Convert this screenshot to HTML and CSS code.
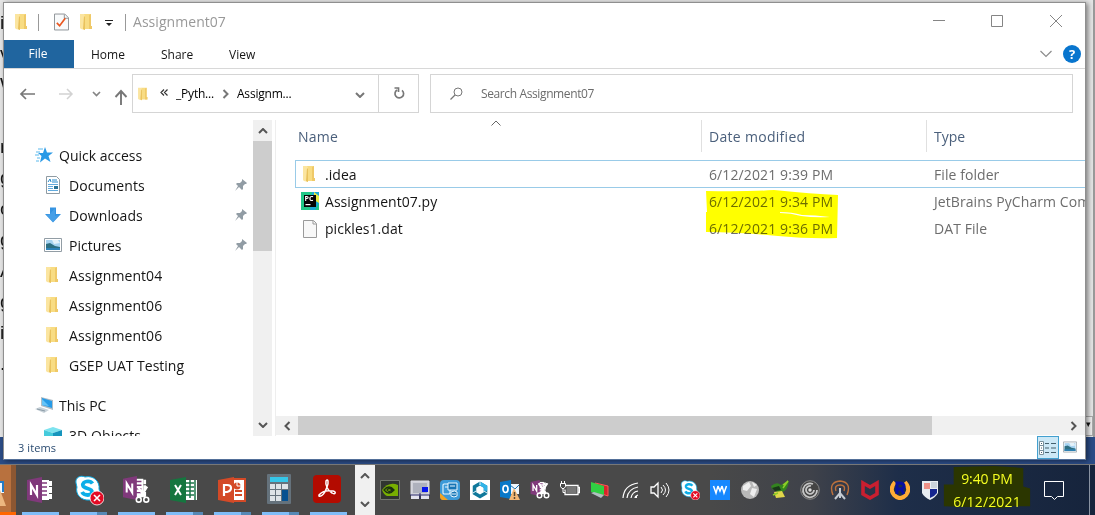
FILE: index.html
```html
<!DOCTYPE html>
<html lang="en">
<head>
<meta charset="utf-8">
<title>Assignment07</title>
<link rel="stylesheet" href="styles.css">
</head>
<body>
<svg class="defs" width="0" height="0">
  <symbol id="folder" viewBox="0 0 16 18"><path d="M5 1h7v12h1v3H5z" fill="#f8dc83"/><path d="M10 2l2-1v12h1v3h-3z" fill="#efc968"/><path d="M1 1h4l1 2v14l-4-1-1-1z" fill="#fbe5a0"/><path d="M5 3l1 1v13l-2-1z" fill="#e9c25d"/></symbol>
  <symbol id="pin" viewBox="0 0 14 14"><path d="M8 1l5 4-1 1h-1L9 8v3l-1 1-3-3-4 4 3-5-2-2 1-1h3l2-2V2z" fill="#919ca4"/></symbol>
  <symbol id="picture" viewBox="0 0 18 14"><path d="M.5.5h17v13H.5z" fill="#fff" stroke="#929da5"/><path d="M2 2h14v10H2z" fill="#a6d3f1"/><path d="M2 6l4-1 5 3 5 1v3H2z" fill="#2d6f82"/><path d="M2 10h14v2H2z" fill="#2e83b9"/><path d="M8 2h6l2 3-6 1z" fill="#e4f2fa"/></symbol>
  <symbol id="onenote" viewBox="0 0 28 26"><path d="M14 3h9v20h-9z" fill="#fff"/><path d="M23 4h3v5h-3zm0 6h3v6h-3zm0 7h3v5h-3z" fill="#fff"/><path d="M15 6h6m-6 4h6m-6 4h6m-6 4h6" stroke="#80397b" stroke-width="1.5"/><path d="M1 3l15-3v26L1 23z" fill="#80397b"/><path d="M5 18V8l6 10V8" fill="none" stroke="#fff" stroke-width="2.2"/></symbol>
  <symbol id="scissors" viewBox="0 0 16 18"><path d="M3 0l8 12M13 0L5 12" stroke="#fff" stroke-width="2.4"/><circle cx="4" cy="14" r="2.6" fill="none" stroke="#fff" stroke-width="1.7"/><circle cx="12" cy="14" r="2.6" fill="none" stroke="#fff" stroke-width="1.7"/></symbol>
  <symbol id="skype" viewBox="0 0 30 30"><path d="M2 8C1 2 7 0 11 2c9-2 15 5 14 12 3 7-3 13-9 11C7 26 1 19 3 12z" fill="#fff" stroke="#0caee8"/><path d="M3 7C3 3 8 1 11 3.500c8-1 13 4 12.500 11 2 6-3 10-8 9C8 24 3 19 4 12z" fill="#fff"/><path d="M18.500 8.500C16 5 8 6 9 10.500c1 4 9 2 9 6.500 0 4-8 4-10 0" fill="none" stroke="#0caee8" stroke-width="3.800"/><circle cx="23" cy="23" r="7" fill="#e30b24" stroke="#fff" stroke-width=".8"/><path d="M20 20l6 6m0-6l-6 6" stroke="#fff" stroke-width="1.600"/></symbol>
  <symbol id="up" viewBox="0 0 10 6"><path d="M1 5l4-4 4 4" fill="none" stroke="currentColor" stroke-width="2"/></symbol>
  <symbol id="down" viewBox="0 0 10 6"><path d="M1 1l4 4 4-4" fill="none" stroke="currentColor" stroke-width="2"/></symbol>
  <symbol id="left" viewBox="0 0 8 10"><path d="M6.500 1l-4 4 4 4" fill="none" stroke="currentColor" stroke-width="2"/></symbol>
  <symbol id="right" viewBox="0 0 8 10"><path d="M1.500 1l4 4-4 4" fill="none" stroke="currentColor" stroke-width="2"/></symbol>
</svg>

<div class="desktop">
  <div class="document">
    <div class="doc-text"><span>in</span><span>vi</span><span>W</span><span></span><span>ne</span><span>g</span><span>o</span><span>g</span><span>Ac</span><span>g</span><span>in</span><span>.</span></div>
    <div class="doc-scroll">▾</div>
  </div>
  <div class="doc-status"></div>

  <main class="window">
    <header class="titlebar">
      <div class="quickbar">
        <svg class="folder f1"><use href="#folder"/></svg><i class="bar b1"></i>
        <svg class="check" viewBox="0 0 16 18"><path d="M.5.5h11l4 4v13H.5z" fill="#f8fafb" stroke="#8a8f93"/><path d="M11 1v4h4" fill="none" stroke="#8a8f93"/><path d="M3 10l3 3 6-8" fill="none" stroke="#e9561f" stroke-width="1.800"/></svg>
        <svg class="folder f2"><use href="#folder"/></svg>
        <svg class="customize" viewBox="0 0 8 7"><path d="M0 0h8v1H0zM1 3h6L4 6z" fill="#222"/></svg><i class="bar b2"></i>
        <span class="title">Assignment07</span>
      </div>
      <svg class="winbuttons" viewBox="0 0 130 14"><path d="M0 7.500h12M58.500 2.500h11v11h-11zM117 2l12 12m0-12l-12 12" fill="none" stroke="#858585"/></svg>
    </header>
    <nav class="tabs"><span class="tab file">File</span><span class="tab home">Home</span><span class="tab share">Share</span><span class="tab view">View</span>
      <div class="help"><svg width="12" height="8" viewBox="0 0 12 8"><path d="M.5 1l5.500 5.500L11.500 1" fill="none" stroke="#8c8c8c" stroke-width="1.200"/></svg><b>?</b></div>
    </nav>
    <div class="toolbar">
      <svg class="arrows" viewBox="0 0 114 22"><path d="M17 11H3m5-5l-5 5 5 5" fill="none" stroke="#777" stroke-width="1.700"/><path d="M41 11h13m-5-5l5 5-5 5" fill="none" stroke="#d2d2d2" stroke-width="1.500"/><path d="M75 9l3.500 3.500L82 9" fill="none" stroke="#858585" stroke-width="1.700"/><path d="M103 22V8m-5.500 6l5.500-6 5.500 6" fill="none" stroke="#777" stroke-width="1.900"/></svg>
      <div class="address"><div class="path"><svg class="folder small"><use href="#folder"/></svg><svg class="chev" viewBox="0 0 8 7"><path d="M4 .5l-3 3 3 3M7.500.5l-3 3 3 3" fill="none" stroke="#333" stroke-width="1.200"/></svg><span class="crumb first">_Pyth...</span><svg class="sep"><use href="#right"/></svg><span class="crumb current">Assignm...</span><svg class="drop"><use href="#down"/></svg></div>
        <div class="refresh"><svg width="12" height="13" viewBox="0 0 12 13"><path d="M4 3a4.300 4.300 0 1 0 5 .3M1.500 1h4v4" fill="none" stroke="#777" stroke-width="1.700"/></svg></div></div>
      <div class="search"><svg width="13" height="13" viewBox="0 0 13 13"><circle cx="8" cy="5" r="4" fill="none" stroke="#777"/><path d="M5 8l-4.500 4.500" stroke="#777" stroke-width="1.200"/></svg><span>Search Assignment07</span></div>
    </div>
    <section class="content">
      <aside class="sidebar">
        <div class="item group"><svg class="star" viewBox="0 0 18 16"><path d="M10 0l2 5.500h6l-4.500 3.500 2 6L10 11.500 5 15.500 6.500 9 3 6h5z" fill="#2b9ae6"/><path d="M3 2h5M1 5h4M0 8h4m-2 3h3m-4 3h3" stroke="#5bb9ec"/></svg><span class="quick">Quick access</span></div>
        <div class="item"><svg class="ico" viewBox="0 0 18 18"><path d="M2.500.5h10l3 3v14h-13z" fill="#fff" stroke="#8f9ba3"/><path d="M4 6l2-3 1 3M8 4h5M8 6h6" fill="none" stroke="#268acb"/><path d="M4 8.500h10M4 10.500h5M4 12.500h5M4 14.500h10" stroke="#61aadd"/><path d="M10 10h4v3h-4z" fill="#287296"/></svg><span class="docs">Documents</span><svg class="pin"><use href="#pin"/></svg></div>
        <div class="item"><svg class="ico" viewBox="0 0 18 18"><path d="M6 1.500h6V8h5l-8 8.500L1 8h5z" fill="#3593e1"/><path d="M6 8l5-6v8l4-1-6 7-7-7z" fill="#58abed" opacity=".5"/></svg><span class="docs">Downloads</span><svg class="pin"><use href="#pin"/></svg></div>
        <div class="item"><svg class="ico"><use href="#picture"/></svg><span class="pics">Pictures</span><svg class="pin"><use href="#pin"/></svg></div>
        <div class="item"><svg class="ico"><use href="#folder"/></svg><span class="assign">Assignment04</span></div>
        <div class="item"><svg class="ico"><use href="#folder"/></svg><span class="assign">Assignment06</span></div>
        <div class="item"><svg class="ico"><use href="#folder"/></svg><span class="assign">Assignment06</span></div>
        <div class="item"><svg class="ico"><use href="#folder"/></svg><span class="gsep">GSEP UAT Testing</span></div>
        <div class="item group pc"><svg class="star" viewBox="0 0 18 16"><path d="M6 0l12 3v10L6 9z" fill="#b0bdc6"/><path d="M7 1l10 3v7L7 8z" fill="#269be7"/><path d="M7 8V2l7 7z" fill="#65c4f8"/><path d="M0 12l5-2 9 3-5 3z" fill="#c8d2d9"/><path d="M2 12l8 2" stroke="#8b9ba6"/></svg><span class="thispc">This PC</span></div>
        <div class="item"><svg class="ico" viewBox="0 0 18 18"><path d="M0 4l9-3 9 3-9 3z" fill="#7de3ef"/><path d="M0 4l9 3v11l-9-4z" fill="#45cbdc"/><path d="M9 7l9-3v10l-9 4z" fill="#1695bd"/></svg><span class="docs">3D Objects</span></div>
      </aside>
      <div class="vscroll"><svg><use href="#up"/></svg><div class="thumb"></div><svg><use href="#down"/></svg></div>
      <div class="pane">
        <svg class="sort" viewBox="0 0 10 6"><path d="M.5 5.500L5 1l4.500 4.500" fill="none" stroke="#666"/></svg>
        <div class="columns"><span class="name">Name</span><span class="date">Date modified</span><span class="type">Type</span></div>
        <div class="rows">
          <div class="row selected"><svg class="ico"><use href="#folder"/></svg><span class="name">.idea</span><span class="date">6/12/2021 9:39 PM</span><span class="type">File folder</span></div>
          <div class="row"><svg class="pycharm" viewBox="0 0 18 18"><path d="M0 0h18v18H0z" fill="#20c887"/><path d="M11 0h7v11l-4 7H9z" fill="#1ca9d8"/><path d="M13 0l5 4v7l-5-3z" fill="#e6ec45"/><path d="M3 3h12v12H3z" fill="#050505"/><text x="3.500" y="9">PC</text><path d="M4.500 12h5v1.200h-5z" fill="#fff"/></svg><span class="name">Assignment07.py</span><span class="date">6/12/2021 9:34 PM</span><span class="type">JetBrains PyCharm Com</span></div>
          <div class="row"><svg class="ico" viewBox="0 0 18 18"><path d="M2.500.5h10l3 3v14h-13z" fill="#f8f8f8" stroke="#9a9a9a"/><path d="M12 1v3h3" fill="none" stroke="#9a9a9a"/></svg><span class="name">pickles1.dat</span><span class="date">6/12/2021 9:36 PM</span><span class="type">DAT File</span></div>
        </div>
        <svg class="marker" viewBox="0 0 134 50"><path d="M1 1q37 1 68-1 38 4 64 5l-1 43q-28 1-59-2-38-4-72-4V22h1z" fill="#ff0"/><path d="M75 22q12 0 22 3 13 0 28 2-15 1-29-1-10-3-21-3z" fill="#fff"/></svg>
        <div class="hscroll"><svg><use href="#left"/></svg><div class="thumb"></div><svg><use href="#right"/></svg></div>
      </div>
    </section>
    <footer class="status"><span>3 items</span><div class="views"><div class="details"><svg width="18" height="14" viewBox="0 0 18 14"><path d="M.5.5h4v13h-4zM0 4.500h5M0 9.500h5" fill="#fff" stroke="#7a929d"/><path d="M2 2.500h1M2 7h1M2 11.500h1M6 2.500h4m2 0h5M6 7h4m2 0h5m-11 4.500h4m2 0h5" stroke="#44606d"/></svg></div><svg class="thumbs"><use href="#picture"/></svg></div></footer>
  </main>

  <footer class="taskbar">
    <div class="edgeapp"><svg width="6" height="25" viewBox="0 0 6 25"><path d="M0 0h4v12H0z" fill="#f3f7fb"/><path d="M0 1h3v10" fill="none" stroke="#247bc4" stroke-width="2"/><path d="M0 9l6 16H0z" fill="#edb77f"/></svg></div>
    <div class="apps">
      <div class="app"><svg class="appicon"><use href="#onenote"/></svg></div>
      <div class="app stack"><svg class="appicon sky"><use href="#skype"/></svg></div>
      <div class="app clip"><svg class="appicon" viewBox="0 0 28 28"><use href="#onenote" width="26" height="24"/><use href="#scissors" x="13" y="10" width="15" height="18"/></svg></div>
      <div class="app stack"><svg class="appicon" viewBox="0 0 28 26"><path d="M13 3h14v20H13z" fill="#fff"/><path d="M14 6h10M14 10h10M14 14h10M14 18h10M20 3v18M25 3v20" stroke="#1d764a" stroke-width="1.500"/><path d="M0 3l16-3v26L0 23z" fill="#15763f"/><path d="M5 8l6 10m0-10L5 18" stroke="#fff" stroke-width="2"/></svg></div>
      <div class="app stack"><svg class="appicon" viewBox="0 0 28 26"><path d="M13 3h14v20H13z" fill="#fff"/><path d="M13 2h14v22H13M17 14h7m-7 4h7" fill="none" stroke="#d44a27" stroke-width="2"/><circle cx="19" cy="9" r="3.500" fill="#d44a27"/><path d="M19 5v4h4" stroke="#fff" fill="none"/><path d="M0 3l16-3v26L0 23z" fill="#d44a27"/><path d="M6 19V8h3q4 0 4 3t-4 4H6" fill="none" stroke="#fff" stroke-width="2.200"/></svg></div>
      <div class="app stack"><svg class="appicon calc" viewBox="0 0 24 30"><rect width="24" height="30" rx="1" fill="#65727c"/><path d="M3 3h18v5H3z" fill="#36c6e8"/><path d="M3 10h5v5H3zm6 0h5v5H9zm6 0h6v5h-6zM3 16h5v5H3zm6 0h5v5H9zM3 22h5v5H3zm6 0h5v5H9z" fill="#dde3e7"/><path d="M15 16h6v11h-6z" fill="#075190"/></svg></div>
      <div class="app"><svg class="appicon acro" viewBox="0 0 28 28"><rect width="28" height="28" rx="4" fill="#b30b00"/><path d="M6 20c3-4 8-5 14-4 4 1 2 4-1 2-4-2-7-8-6-12 2-3 3 1 1 6-2 6-5 10-8 9z" fill="none" stroke="#fff" stroke-width="1.500"/></svg></div>
    </div>
    <div class="taskscroll"><svg><use href="#up"/></svg><svg><use href="#down"/></svg></div>
    <div class="tray">
      <svg viewBox="0 0 20 20"><path d="M.5.5h19v19H.5z" fill="#303530" stroke="#73776f"/><path d="M2 10q7-9 16-5v11H7q-3-1-5-6z" fill="#78af00"/><path d="M4 10q5-6 10 0-5 6-10 0zm3 0q2-3 5 0-3 3-5 0z" fill="none" stroke="#1b3010" stroke-width="1.300"/></svg>
      <svg viewBox="0 0 20 20"><path d="M1 1h18v14H1z" fill="#cfd0d8" stroke="#dedee6"/><path d="M3 3h14v10H3z" fill="#aeb1bd"/><path d="M12 7h6v5h-6z" fill="#0715ec"/><path d="M1 15h8v4H1zm10 0h8v4h-8z" fill="#e2e2ee"/><path d="M0 15h20M10 13v6" stroke="#26266a"/></svg>
      <svg viewBox="0 0 20 20"><rect width="20" height="20" rx="4" fill="#3c9ad8"/><path d="M0 13l8 7H3q-3 0-3-4z" fill="#f2a321"/><rect x="3" y="4" width="7" height="10" rx="1" fill="none" stroke="#eaf7ff" stroke-width="1.100"/><path d="M8 3h9v7H8zm3 9q4-2 6 0v4q-3 2-6 0z" fill="#1775b5" stroke="#eaf7ff"/><path d="M5 7h3m2-1h5m-3 8h4" stroke="#eaf7ff"/></svg>
      <svg viewBox="0 0 20 20"><path d="M0 0h20v20H0z" fill="#fff"/><path d="M10 3.500l5.500 3.200v6.600L10 16.500l-5.500-3.200V6.700z" fill="none" stroke="#10789b" stroke-width="3.500"/><path d="M10 3.500l5.500 3.200v4" fill="none" stroke="#31b3e8" stroke-width="3.500"/><path d="M3 13l3-2m4-10v4m7 8l-3-2" stroke="#e5f8ff"/></svg>
      <svg viewBox="0 0 20 20"><path d="M9 4h10v10H9z" fill="#eff6fb"/><path d="M10 5l5 4 4-4" stroke="#1674bb" fill="none"/><path d="M0 2l11-2v19L0 17z" fill="#0878c8"/><ellipse cx="5.500" cy="9" rx="2.500" ry="3.500" fill="none" stroke="#fff" stroke-width="1.700"/><path d="M14 8l6 12H9z" fill="#f3b775"/><path d="M14.500 12v4m0 1v2" stroke="#574831" stroke-width="1.500"/></svg>
      <svg viewBox="0 0 20 20"><use href="#onenote" width="17" height="16"/><use href="#scissors" x="6" y="3" width="14" height="16"/></svg>
      <svg viewBox="0 0 20 20"><path d="M5 5.500h13v9H5v-5m13-2h1.500v5H18" fill="none" stroke="#fff" stroke-width="1.300"/><path d="M6.500 7h10v6h-10z" fill="#777"/><path d="M.5 3.500h5v3l-1.500 2H2l-1.500-2zM1.500 1v2m3-2v2M3 8.500v4h2" fill="#4a4a4a" stroke="#fff"/></svg>
      <svg viewBox="0 0 20 20"><path d="M5 3l13 3v10L6 12z" fill="#d6252a" stroke="#ff5555"/><path d="M1 2l13 4v9L1 12z" fill="#30cf43"/><path d="M1 13l3-1 10 3-3 3z" fill="#afbfc0"/></svg>
      <svg viewBox="0 0 20 20"><g fill="none" stroke="#fff" stroke-width="1.200"><path d="M3 18Q4 5 18 3M7 18Q8 9 18 7M11 18q1-6 7-7M15 18q0-2 3-3"/></g><path d="M15 16h2v2h-2z" fill="#fff"/></svg>
      <svg viewBox="0 0 20 20"><path d="M1 7h3l4-4v14l-4-4H1z" fill="none" stroke="#fff" stroke-width="1.300"/><path d="M11 7q3 3 0 6m2-8q5 5 0 10m3-12q6 7 0 14" fill="none" stroke="#fff"/></svg>
      <svg><use href="#skype"/></svg>
      <svg viewBox="0 0 20 20"><path d="M0 0h20v20H0z" fill="#1688ff"/><path d="M3.500 6l2.500 7 2-7m4 0l2 7 2.500-7M8 6l2 5 2-5" fill="none" stroke="#fff" stroke-width="1.500"/></svg>
      <svg viewBox="0 0 20 20"><circle cx="10" cy="10" r="9" fill="#b9b9b9"/><path d="M3 6l6-4 2 4-4 5-4-1zm9-4l5 3-3 2zm0 6l5 1-3 8-4-3z" fill="#eee"/></svg>
      <svg viewBox="0 0 20 20"><path d="M1 6q6-5 10-1l8-4q-2 11-7 11l-8 2 3-3-5-2z" fill="#33831f"/><path d="M2 8l7-2 2 4-6 1z" fill="#193718"/><path d="M4 12l8-1 3 6-9 1z" fill="#e1d64a"/><path d="M13 5l5-4-5 7M3 15l5-2" fill="none" stroke="#8ccc27" stroke-width="1.500"/></svg>
      <svg viewBox="0 0 20 20"><circle cx="10" cy="10" r="9.300" fill="#444" stroke="#888"/><path d="M17 10a7 7 0 1 1-4-6M14 10a4 4 0 1 1-3-4" fill="none" stroke="#c6c6c6" stroke-width="1.800"/><circle cx="10" cy="10" r="1.700" fill="#ddd"/></svg>
      <svg viewBox="0 0 20 20"><path d="M3 15Q-2 2 10 1q12 1 7 14M6 11q-2-6 4-6t4 6" fill="none" stroke="#bd713c" stroke-width="1.400"/><path d="M10 8v5m-5 6l5-6 5 6m-5-6v5" fill="none" stroke="#c5cbd2" stroke-width="2"/></svg>
      <svg viewBox="0 0 20 20"><path d="M3 3l7 4 7-4v11l-7 4-7-4z" fill="none" stroke="#c91f30" stroke-width="3.600"/></svg>
      <svg viewBox="0 0 20 20"><path d="M5 2Q-1 9 4 15q6 6 12 0 5-6-1-13" fill="none" stroke="#ffac36" stroke-width="4"/><path d="M7 14V3h2q5 0 5 3t-5 3H8m3 0l3 5" fill="none" stroke="#0710a1" stroke-width="3"/></svg>
      <svg viewBox="0 0 20 20"><path d="M2 1h16v12q-3 5-8 7-6-3-8-7z" fill="#e8edf1"/><path d="M4 3h6v6H4z" fill="#ef9187"/><path d="M10 9h7v4q-3 4-7 5z" fill="#15268f"/><path d="M11 2h6v6h-6z" fill="#c9d2da"/></svg>
    </div>
    <div class="clock"><svg class="ink" viewBox="0 0 90 51"><path d="M11 2l41-1 30 2v19l7 2v18H64l-1 2-62-2V20h10z" fill="#2b3600"/></svg><span class="time">9:40 PM</span><span class="day">6/12/2021</span></div>
    <svg class="notice" viewBox="0 0 20 20"><path d="M.5 1.500h19v15h-6l-3 3-3-3h-7z" fill="none" stroke="#fff"/></svg>
    <i class="show"></i>
  </footer>
</div>
</body>
</html>
```

FILE: styles.css
```css
* { box-sizing: border-box; }
body { margin: 0; font-family: "Open Sans", "Noto Sans", sans-serif; font-size: 14px; color: #151515; }
svg { display: block; flex: none; }
.defs { position: absolute; }
.desktop { position: relative; width: 1095px; height: 515px; overflow: hidden; background: #2b4c86; }
.document { display: flex; justify-content: space-between; height: 437px; background: #e5e5e5; border-right: 2px solid #999; }
.doc-text { width: 24px; padding-top: 7px; display: flex; flex-direction: column; font: 19px/31px "Liberation Sans", sans-serif; }
.doc-text span { height: 31px; flex: none; }
.doc-scroll { align-self: flex-end; width: 9px; height: 20px; margin-bottom: 1px; border: 1px solid #aaa; background: #eee; font-size: 9px; text-align: center; }
.doc-status { height: 27px; }
.window { position: absolute; left: 3px; top: 2px; width: 1083px; height: 458px; border: 1px solid #8f8f8f; border-bottom-color: #547099; background: #fff; box-shadow: 2px 1px 5px #0007; display: flex; flex-direction: column; white-space: nowrap; }
.titlebar { display: flex; justify-content: space-between; height: 37px; padding: 10px 22px 0 10px; }
.quickbar { display: flex; align-items: center; height: 18px; }
.folder { width: 16px; height: 18px; }
.bar { width: 1px; height: 17px; background: #999; }
.b1 { margin-left: 8px; }
.check { width: 15px; height: 18px; margin-left: 15px; }
.f2 { margin-left: 10px; }
.customize { width: 8px; height: 7px; margin: 2px 0 0 10px; }
.b2 { margin-left: 12px; }
.title { margin: -2px 0 0 7px; color: #999; letter-spacing: .05px; }
.winbuttons { width: 130px; height: 14px; }
.tabs { display: flex; height: 29px; border-bottom: 1px solid #d8d8d8; font-size: 12px; line-height: 29px; }
.tab { flex: none; }
.file { width: 70px; background: #20659f; color: #fff; text-align: center; padding-right: 2px; line-height: 28px; }
.home { margin-left: 17px; width: 70px; }
.share { width: 68px; }
.help { display: flex; align-items: center; gap: 11px; margin-left: auto; padding-right: 4px; }
.help b { width: 18px; height: 18px; border-radius: 50%; background: #0875ce; color: #fff; line-height: 18px; font-size: 13px; text-align: center; }
.toolbar { display: flex; height: 51px; padding-top: 5px; }
.arrows { width: 114px; height: 22px; margin: 9px 0 0 14px; }
.address { display: flex; width: 287px; height: 39px; border: 1px solid #d5d5d5; font-size: 12px; color: #000; }
.path { flex: 1; display: flex; align-items: center; }
.small { width: 13px; height: 14px; margin-left: 4px; }
.chev { width: 8px; height: 7px; margin: -2px 0 0 10px; }
.crumb { margin-left: 7px; letter-spacing: -.2px; }
.first { margin-left: 8px; }
.sep { width: 8px; height: 10px; margin-left: 8px; color: #777; }
.drop { width: 10px; height: 6px; margin: 2px 13px 0 auto; color: #777; }
.refresh { width: 40px; border-left: 1px solid #d5d5d5; display: grid; place-items: center; }
.search { display: flex; align-items: center; width: 643px; height: 39px; margin-left: 11px; padding-left: 19px; border: 1px solid #d5d5d5; color: #6c6c6c; font-size: 12px; }
.search span { margin-left: 18px; letter-spacing: -.38px; }
.content { display: flex; height: 316px; }
.sidebar { width: 249px; height: 316px; padding-top: 20px; overflow: hidden; }
.item { display: flex; align-items: center; height: 30px; padding-left: 40px; }
.item span { margin-left: 7px; }
.docs { letter-spacing: .1px; }
.assign { letter-spacing: .08px; }
.group { padding-left: 31px; }
.item .quick, .item .thispc { margin-left: 6px; }
.pc { margin-top: 10px; }
.star { width: 18px; height: 16px; }
.ico { width: 18px; height: 18px; }
.pin { width: 14px; height: 14px; margin: 0 5px 0 auto; }
.vscroll { width: 19px; display: flex; flex-direction: column; align-items: center; background: #f0f0f0; color: #555; }
.vscroll svg { width: 10px; height: 6px; margin: 8px 0 7px; }
.vscroll .thumb { width: 19px; height: 110px; background: #cdcdcd; }
.vscroll svg:last-child { margin: auto 0 8px; }
.pane { position: relative; flex: 1; margin-left: 3px; border-left: 1px solid #eee; overflow: hidden; display: flex; flex-direction: column; }
.sort { position: absolute; left: 215px; top: 0; width: 10px; height: 6px; }
.columns { display: flex; height: 32px; line-height: 33px; color: #4b607c; }
.columns .name { width: 425px; padding-left: 22px; letter-spacing: .2px; }
.columns .date, .columns .type { border-left: 1px solid #e0e0e0; padding-left: 7px; }
.columns .date { width: 225px; letter-spacing: .3px; }
.rows { padding: 8px 0 0 19px; }
.row { display: flex; align-items: center; width: 810px; height: 27px; padding-left: 6px; }
.selected { height: 28px; border: 1px solid #99cbe8; padding-left: 5px; }
.row .name { width: 384px; margin-left: 6px; letter-spacing: .04px; }
.row .date { width: 225px; color: #6d6d6d; letter-spacing: .11px; }
.row .type { color: #6d6d6d; letter-spacing: .07px; }
.pycharm { width: 18px; height: 18px; margin-top: -2px; }
.pycharm text { font: bold 7px "Open Sans", sans-serif; fill: #fff; }
.marker { position: absolute; left: 429px; top: 70px; width: 134px; height: 50px; mix-blend-mode: multiply; }
.hscroll { display: flex; align-items: center; justify-content: space-between; height: 19px; margin-top: auto; margin-bottom: 1px; padding: 0 7px 0 7px; background: #f0f0f0; color: #555; }
.hscroll svg { width: 8px; height: 10px; }
.hscroll .thumb { width: 634px; height: 19px; margin: 0 auto 0 7px; background: #cdcdcd; }
.status { display: flex; align-items: center; justify-content: space-between; height: 23px; padding-left: 14px; font-size: 11px; color: #294a70; letter-spacing: .1px; }
.views { display: flex; align-items: center; height: 23px; gap: 4px; padding-right: 8px; }
.details { width: 22px; height: 23px; background: #cce8f6; border: 1px solid #43a0cf; display: grid; place-items: center; }
.thumbs { width: 14px; height: 12px; margin-top: -2px; }
.taskbar { position: absolute; left: 0; top: 464px; width: 1095px; height: 51px; border-top: 1px solid #777; display: flex; background: linear-gradient(90deg, #494949 0 65%, #3f424a 74%, #1e2e49 82%, #16243c 100%); color: #fff; }
.edgeapp { width: 16px; background: linear-gradient(90deg, #b8713e 0 11px, #8c5732 11px); border-bottom: 3px solid #f60; padding-top: 16px; }
.apps { display: flex; width: 339px; }
.app { flex: none; width: 48px; height: 50px; padding: 11px 0 0 10px; display: flex; flex-direction: column; }
.app::after { content: ""; width: 37px; height: 3px; margin: auto 0 0 -4px; background: #7fbdf8; }
.stack::after { background: linear-gradient(90deg, #7fbdf8 27px, #5588b5 27px); }
.appicon { width: 28px; height: 28px; }
.sky { width: 30px; height: 32px; margin-top: -2px; }
.calc { height: 30px; margin-top: -2px; margin-left: -1px; }
.acro { margin: -1px 0 0 -1px; }
.taskscroll { width: 20px; background: #f0f0f0; color: #555; display: flex; flex-direction: column; justify-content: space-between; align-items: center; padding: 8px 0; }
.taskscroll svg { width: 10px; height: 6px; }
.tray { display: flex; gap: 10px; padding: 15px 0 0 5px; width: 567px; }
.tray svg { width: 20px; height: 20px; }
.clock { position: relative; width: 90px; display: flex; flex-direction: column; align-items: center; color: #f6ff21; font-size: 14px; }
.clock span { position: relative; line-height: 18px; }
.clock .time { margin-top: 5px; letter-spacing: -.1px; }
.clock .day { margin-top: 5px; letter-spacing: .15px; }
.ink { position: absolute; width: 90px; height: 50px; left: 0; top: 0; }
.notice { width: 20px; height: 20px; margin: 15px 0 0 12px; }
.show { width: 1px; height: 51px; margin-left: 25px; background: #8993a2; }
```
